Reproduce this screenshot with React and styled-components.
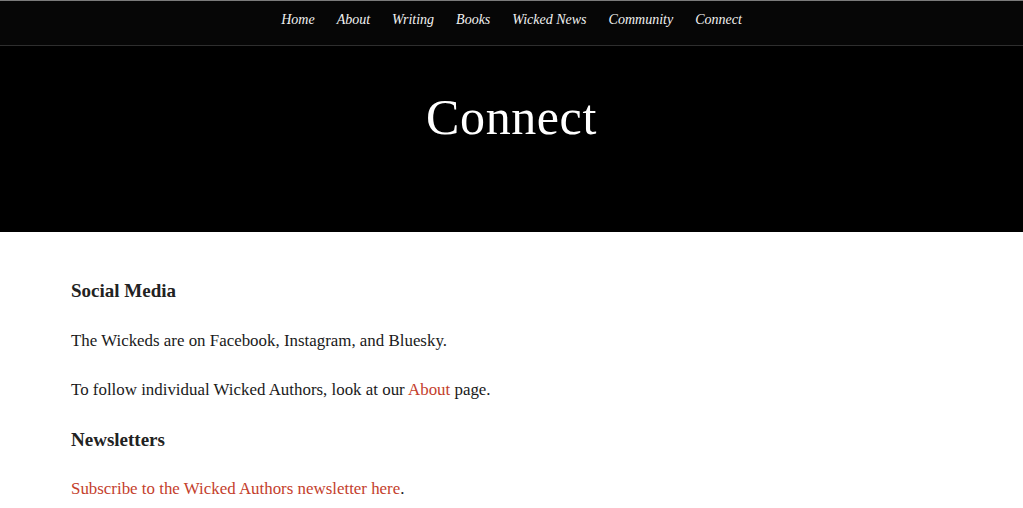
import React from "react";
import styled, { createGlobalStyle } from "styled-components";

const Global = createGlobalStyle`
  html, body { margin: 0; padding: 0; background: #fff; }
  body { font-family: "Liberation Serif", "DejaVu Serif", serif; color: #1a1a1a; }
`;

const Nav = styled.nav`
  background: #060606;
  border-top: 1px solid #7a7a7a;
  border-bottom: 1px solid #2e2e2e;
  height: 44px;
  display: flex;
  justify-content: center;
  align-items: center;
  gap: 22px;
`;

const NavLink = styled.a`
  color: #f2f2f2;
  font-style: italic;
  font-size: 14px;
  text-decoration: none;
  padding-bottom: 6px;
`;

const Hero = styled.header`
  background: #000;
  height: 186px;
  display: flex;
  justify-content: center;
  align-items: flex-start;
`;

const Title = styled.h1`
  margin: 42px 0 0;
  color: #fff;
  font-weight: 400;
  font-size: 50px;
  letter-spacing: 0.6px;
`;

const Content = styled.main`
  padding: 47px 71px 0;
  display: flex;
  flex-direction: column;
`;

const Heading = styled.h2`
  margin: 0;
  font-size: 19px;
  font-weight: 700;
  color: #222;
  line-height: 24px;
  height: 49.5px;
`;

const Para = styled.p`
  margin: 0;
  font-size: 16.9px;
  line-height: 24px;
  height: 49.5px;
`;

const Link = styled.a`
  color: #c4402c;
  text-decoration: none;
`;

export default function App() {
  const items = ["Home", "About", "Writing", "Books", "Wicked News", "Community", "Connect"];
  return (
    <>
      <Global />
      <Nav>
        {items.map((i) => (
          <NavLink key={i} href="#">{i}</NavLink>
        ))}
      </Nav>
      <Hero>
        <Title>Connect</Title>
      </Hero>
      <Content>
        <Heading>Social Media</Heading>
        <Para>The Wickeds are on Facebook, Instagram, and Bluesky.</Para>
        <Para>
          To follow individual Wicked Authors, look at our <Link href="#">About</Link> page.
        </Para>
        <Heading>Newsletters</Heading>
        <Para>
          <Link href="#">Subscribe to the Wicked Authors newsletter here</Link>.
        </Para>
      </Content>
    </>
  );
}
